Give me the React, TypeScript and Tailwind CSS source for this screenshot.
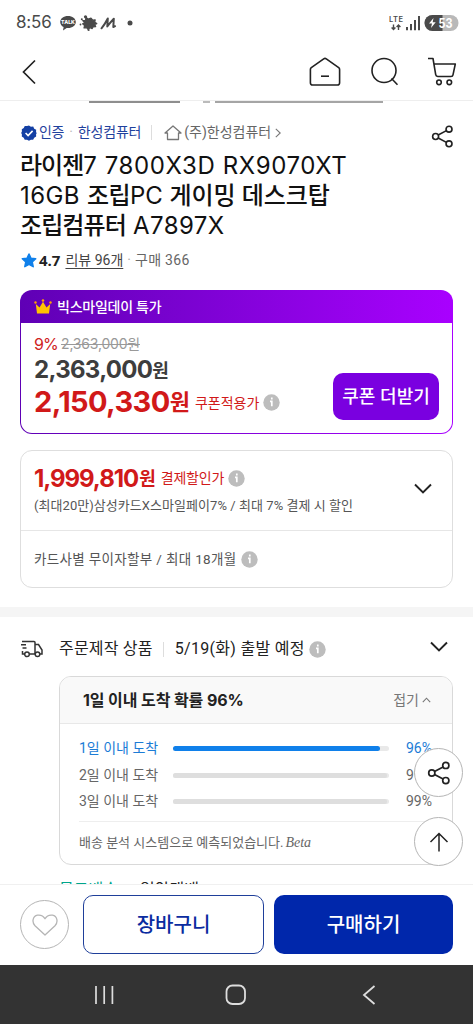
import { ReactNode } from 'react';

const arrivals = [
  { label: '1일 이내 도착', percent: 96, active: true },
  { label: '2일 이내 도착', percent: 99, active: false },
  { label: '3일 이내 도착', percent: 99, active: false },
];

function InfoIcon() {
  return (
    <svg width="17" height="17" viewBox="0 0 17 17" className="shrink-0">
      <circle cx="8.5" cy="8.5" r="8.2" fill="#bdbdbd" />
      <path d="M8.8 3.6v1.9M7 7.4h1.8v4.9" stroke="#fff" strokeWidth="1.7" fill="none" />
    </svg>
  );
}

function ShareIcon({ size = 24 }: { size?: number }) {
  return (
    <svg width={size} height={size} viewBox="0 0 24 24" fill="none" stroke="#222" strokeWidth="1.7">
      <circle cx="4.8" cy="12" r="3.1" />
      <circle cx="18.8" cy="4.4" r="3.1" />
      <circle cx="18.8" cy="19.6" r="3.1" />
      <path d="M7.5 10.5l8.6-4.6M7.5 13.5l8.6 4.6" />
    </svg>
  );
}

function ChevronDown() {
  return (
    <svg width="18" height="12" viewBox="0 0 18 12" fill="none" stroke="#222" strokeWidth="1.9">
      <path d="M1 1.5l8 8 8-8" />
    </svg>
  );
}

function FloatingButton({ children }: { children: ReactNode }) {
  return (
    <button className="flex h-[49px] w-[49px] items-center justify-center rounded-full border border-[#b5b5b5] bg-white">
      {children}
    </button>
  );
}

function StatusBar() {
  return (
    <div className="flex h-11 shrink-0 items-center pl-4 pr-[14px] pt-px text-[#4a4a4a]">
      <span className="font-['Inter'] text-[17px] tracking-[-0.2px]">8:56</span>
      <svg width="74" height="18" viewBox="0 0 74 18" className="ml-2" fill="#4a4a4a">
        <path d="M8 2C3.600 2 .2 4.600 .2 8c0 2.200 1.400 4 3.400 5.100L3 16.500l3.700-2.600c.4.100.9.100 1.300.1 4.400 0 7.800-2.600 7.800-6S12.400 2 8 2z" />
        <text x="8" y="10.300" textAnchor="middle" fontFamily="Inter, sans-serif" fontSize="5.200" fontWeight="800" fill="#fff">TALK</text>
        <path d="M26 3.200l2.200 1.900 2.800-1 1.800 2.100 2.400-.4-.4 2.400 2 1.400-2 .9.900 2.200-2.700.2-.8 1.700-2.200-.9-1.900 1.700-1.500-1.800-2.600.3.600-2.400-2-1.600 2.200-1.100-2.100-2.100 2.800-.3z" stroke="#4a4a4a" strokeWidth="1.200" strokeLinejoin="round" />
        <circle cx="25.500" cy="2.800" r="1.600" />
        <circle cx="20.500" cy="10.500" r="0.900" />
        <circle cx="28.600" cy="16" r="1.100" />
        <circle cx="21.800" cy="5.200" r="1" />
        <path d="M41.500 14.300C43.500 12 46 8 47.800 4.500L47.300 12.500C49.500 9.500 51.500 7 53.800 4.700L53.300 13l1.800-.8" fill="none" stroke="#4a4a4a" strokeWidth="2" strokeLinejoin="round" strokeLinecap="round" />
        <circle cx="70" cy="9" r="2.500" />
      </svg>
      <svg width="70" height="18" viewBox="0 0 70 18" className="ml-auto" fill="#4a4a4a">
        <text x="0" y="8" fontFamily="Inter, sans-serif" fontSize="7.500" fontWeight="600" textLength="14">LTE</text>
        <path d="M4.500 10.500v5M2.600 13.600l1.900 2 1.900-2M9.500 16v-5M7.600 12.900l1.900-2 1.900 2" fill="none" stroke="#4a4a4a" strokeWidth="1.400" />
        <path d="M17 13h2v3.300h-2zM21 10h2v6.300h-2zM25 6h2v10.300h-2zM29 2h2v14.300h-2z" />
        <rect x="35.500" y="1" width="34" height="16" rx="8" fill="#b9b9b9" />
        <path d="M53.500 1h-10a8 8 0 000 16h10z" />
        <path d="M44.500 4l-4.500 5.600h3l-1 4.400 4.700-5.800h-3z" fill="#fff" />
        <text x="49.500" y="13.600" fontFamily="Inter, sans-serif" fontSize="12.500" fontWeight="700" fill="#fff" textLength="14" lengthAdjust="spacingAndGlyphs">53</text>
      </svg>
    </div>
  );
}

function Header() {
  return (
    <header className="flex h-[57px] shrink-0 items-center border-b border-[#eee] pl-[21px] pr-4">
      <svg width="16" height="26" viewBox="0 0 16 26" fill="none" stroke="#222" strokeWidth="1.700">
        <path d="M14 1.500L2.500 13 14 24.500" />
      </svg>
      <svg width="32" height="30" viewBox="0 0 32 30" className="ml-auto" fill="none" stroke="#222" strokeWidth="1.600">
        <path d="M2.300 10.700L14.700 1.800q1.300-.9 2.600 0L29.700 10.700q.9.700.9 1.800v13.200q0 2.300-2.300 2.300H3.700q-2.300 0-2.300-2.300V12.500q0-1.100.9-1.800z" strokeLinejoin="round" />
        <path d="M12 19.200h8" />
      </svg>
      <svg width="28" height="30" viewBox="0 0 28 30" className="ml-[30px]" fill="none" stroke="#222" strokeWidth="1.600">
        <circle cx="13" cy="13.500" r="12" />
        <path d="M20.500 21.500l6 6.300" />
      </svg>
      <svg width="30" height="30" viewBox="0 0 30 30" className="ml-[28px]" fill="none" stroke="#222" strokeWidth="1.600">
        <path d="M1 1.500h5l2.700 16.200q.3 1.800 2 1.800h13.300q1.700 0 2-1.700L28.300 7H7" strokeLinejoin="round" />
        <circle cx="12" cy="25.300" r="2.300" />
        <circle cx="22.300" cy="25.300" r="2.300" />
      </svg>
    </header>
  );
}

function ProductInfo() {
  return (
    <section className="px-5">
      <div className="flex h-[59px] items-center text-[14px]">
        <svg width="18" height="18" viewBox="0 0 18 18">
          <path d="M9 1l2.100 1.300 2.500-.1 1.100 2.200 2.100 1.300-.1 2.500L17.500 9l-.8 1.600.1 2.400-2.100 1.300-1.200 2.200-2.400-.1L9 17.500l-2.100-1.100-2.500.1-1.100-2.200L1.200 13l.1-2.400L.5 9l.8-1.600L1.200 5l2.100-1.300 1.100-2.200 2.500.1z" fill="#1440a4" transform="translate(0.700 0.600) scale(0.920)" />
          <path d="M5.600 9l2.500 2.500 4.500-4.600" stroke="#fff" strokeWidth="1.600" fill="none" />
        </svg>
        <span className="ml-px tracking-[-0.300px] text-[#1f419d]">인증</span>
        <span className="mx-[5px] text-[#bbb]">·</span>
        <span className="tracking-[-0.200px] text-[#1f419d]">한성컴퓨터</span>
        <span className="ml-[10px] h-[15px] w-px bg-[#ddd]" />
        <svg width="18" height="16" viewBox="0 0 18 16" className="ml-3" fill="none" stroke="#777" strokeWidth="1.300">
          <path d="M1 8l8-7 8 7h-2.500v6.500h-11V8z" strokeLinejoin="round" />
        </svg>
        <span className="ml-[2px] text-[#666]">(주)한성컴퓨터</span>
        <svg width="6" height="10" viewBox="0 0 6 10" className="ml-1" fill="none" stroke="#777" strokeWidth="1.100">
          <path d="M.8.800L5.200 5 .8 9.200" />
        </svg>
        <span className="ml-auto mt-2 -mr-px">
          <ShareIcon size={23} />
        </span>
      </div>
      <h1 className="-mt-[11px] font-[Inter,'Noto_Sans_CJK_KR',sans-serif] text-[24px] leading-[30px] text-[#111]">
        <span className="block whitespace-nowrap">
          <span className="font-medium tracking-[-1px]">라이젠</span>
          <span className="tracking-[0.600px]">7 7800X3D RX9070XT</span>
        </span>
        <span className="block whitespace-nowrap">
          <span className="tracking-[0.400px]">16GB </span>
          <span className="font-medium tracking-[-0.600px]">조립</span>PC{' '}
          <span className="font-medium tracking-[-0.100px]">게이밍 데스크탑</span>
        </span>
        <span className="block whitespace-nowrap">
          <span className="font-medium tracking-[-0.900px]">조립컴퓨터</span>
          <span className="tracking-[0.400px]"> A7897X</span>
        </span>
      </h1>
      <div className="mt-[7px] flex h-6 items-center text-[14px] text-[#666]">
        <svg width="16" height="15" viewBox="0 0 16 15" className="ml-px">
          <path d="M8 1l2 4.300 4.700.5-3.500 3.200 1 4.700L8 11.400l-4.200 2.300 1-4.700L1.300 5.800 6 5.300z" fill="#1080ea" stroke="#1080ea" strokeWidth="1.500" strokeLinejoin="round" />
        </svg>
        <span className="ml-[2px] font-['Open_Sans'] text-[15px] font-bold text-[#222]">4.7</span>
        <span className="ml-[5px] text-[#444] underline underline-offset-[3px]">리뷰 96개</span>
        <span className="mx-1 text-[#aaa]">·</span>
        <span className="tracking-[0.300px]">구매 366</span>
      </div>
    </section>
  );
}

function PromoCard() {
  return (
    <section className="mx-5 mt-[18px] h-[144px] shrink-0 rounded-xl bg-linear-to-r from-[#5f00b5] to-[#a900ff] p-px">
      <div className="flex h-8 items-center pl-[13px]">
        <svg width="18" height="16" viewBox="0 0 18 16" fill="#ffc400">
          <path d="M1.800 5l3.700 3.500L9 2.800l3.500 5.700L16.200 5 15 14.500H3z" />
          <circle cx="1.500" cy="3.500" r="1.200" fill="#ffa000" />
          <circle cx="9" cy="1.500" r="1.300" fill="#ffa000" />
          <circle cx="16.500" cy="3.500" r="1.200" fill="#ffa000" />
        </svg>
        <span className="ml-[5px] text-[14px] font-medium tracking-[-0.250px] text-white">빅스마일데이 특가</span>
      </div>
      <div className="flex h-[110px] justify-between rounded-b-[11px] bg-white pl-[13px] pr-[13px] font-[Inter,'Noto_Sans_CJK_KR',sans-serif]">
        <div className="whitespace-nowrap pt-[9px]">
          <div className="flex h-[23px] items-center">
            <span className="text-[16px] tracking-[-0.800px] text-[#cf2222]">9%</span>
            <span className="ml-[3px] text-[14px] tracking-[-0.200px] text-[#999] line-through">2,363,000원</span>
          </div>
          <div className="flex h-[30px] items-center text-[24px] font-bold text-[#3d3d3d]">
            <span className="tracking-[-0.700px]">2,363,000</span>
            <span className="text-[18px]">원</span>
          </div>
          <div className="flex h-[34px] items-center text-[#d11919]">
            <span className="text-[29px] font-bold tracking-[-0.600px]">2,150,330</span>
            <span className="text-[22px] font-bold">원</span>
            <span className="ml-[5px] mr-1 text-[14px]">쿠폰적용가</span>
            <InfoIcon />
          </div>
        </div>
        <button className="mt-[50px] h-[47px] w-[106px] rounded-[10px] bg-[#7a00e0] text-[18px] font-medium text-white">
          쿠폰 더받기
        </button>
      </div>
    </section>
  );
}

function PaymentCard() {
  return (
    <section className="mx-5 mt-4 h-[138px] shrink-0 whitespace-nowrap rounded-xl border border-[#dedede]">
      <div className="flex h-20 items-center justify-between border-b border-[#e6e6e6] pl-[13px] pr-5">
        <div>
          <div className="flex h-[30px] items-center text-[#d11919]">
            <span className="font-['Inter'] text-[24px] font-bold tracking-[-1.050px]">1,999,810</span>
            <span className="ml-px text-[18px] font-bold">원</span>
            <span className="ml-[5px] mr-1 text-[14px] tracking-[-0.200px]">결제할인가</span>
            <InfoIcon />
          </div>
          <p className="h-6 text-[13px] leading-6 tracking-[0.050px] text-[#555]">(최대20만)삼성카드X스마일페이7% / 최대 7% 결제 시 할인</p>
        </div>
        <span className="-mt-1">
          <ChevronDown />
        </span>
      </div>
      <div className="flex h-14 items-center gap-1 pl-[13px] text-[13.500px] tracking-[0.350px] text-[#555]">
        <span>카드사별 무이자할부 / 최대 18개월</span>
        <InfoIcon />
      </div>
    </section>
  );
}

function Delivery() {
  return (
    <section className="whitespace-nowrap px-5">
      <div className="flex h-[59px] items-center pt-[5px] text-[16px] text-[#222]">
        <svg width="24" height="18" viewBox="0 0 24 18" fill="none" stroke="#333" strokeWidth="1.500">
          <path d="M2 1.500h12q1 0 1 1V14h-5.500M15 4.500h3.500l3.500 5.500v4h-2M4.500 14H2.500v-3M1 4.800h5M2.500 8h4" />
          <circle cx="7" cy="14.300" r="2.300" />
          <circle cx="17.500" cy="14.300" r="2.300" />
        </svg>
        <span className="ml-[15px] tracking-[0.200px]">주문제작 상품</span>
        <span className="ml-[10px] mr-[11px] h-[15px] w-px bg-[#ddd]" />
        <span className="mr-1 tracking-[0.300px]">5/19(화) 출발 예정</span>
        <InfoIcon />
        <span className="ml-auto mr-[5px] mb-1">
          <ChevronDown />
        </span>
      </div>
      <div className="ml-[39px] h-[189px] overflow-hidden rounded-xl border border-[#d9d9d9]">
        <div className="flex h-[47px] items-center justify-between border-b border-[#e8e8e8] bg-[#f9f9f9] pl-[23px] pr-[21px]">
          <span className="font-[Inter,'Noto_Sans_CJK_KR',sans-serif] text-[16px] font-bold tracking-[-0.100px] text-[#222]">
            1일 이내 도착 확률 96%
          </span>
          <span className="flex items-center gap-[3px] text-[14px] text-[#777]">
            접기
            <svg width="9" height="6" viewBox="0 0 9 6" fill="none" stroke="#777" strokeWidth="1.100">
              <path d="M.8 5.200L4.500 1.200l3.700 4" />
            </svg>
          </span>
        </div>
        <div className="ml-[19px] mr-[19px] border-b border-[#eee] pt-[11px] pb-[6px]">
          {arrivals.map((row) => (
            <div
              key={row.label}
              className={`flex h-[26.800px] items-center text-[14px] ${row.active ? 'text-[#1c7cd6]' : 'text-[#666]'}`}
            >
              <span className="w-[94px]">{row.label}</span>
              <span className="h-[5px] w-[216px] rounded-full bg-[#e9e9e9]">
                <span
                  className={`block h-full rounded-full ${row.active ? 'bg-[#1080ea]' : 'bg-[#dedede]'}`}
                  style={{ width: `${row.percent}%` }}
                />
              </span>
              <span className="ml-[17px]">{row.percent}%</span>
            </div>
          ))}
        </div>
        <p className="ml-[19px] flex h-10 items-center text-[13px] text-[#666]">
          배송 분석 시스템으로 예측되었습니다.
          <span className="ml-[2px] font-['Liberation_Serif'] text-[14px] italic">Beta</span>
        </p>
      </div>
      <div className="ml-[39px] mt-[13px] flex h-6 text-[16px] leading-6">
        <span className="text-[#00a58b]">무료배송</span>
        <span className="mx-[9px] text-[#aaa]">·</span>
        <span className="text-[#222]">일양택배</span>
      </div>
    </section>
  );
}

export default function App() {
  return (
    <div className="relative flex h-[1024px] w-[473px] flex-col overflow-hidden bg-white font-[Roboto,'Noto_Sans_CJK_KR',sans-serif]">
      <StatusBar />
      <Header />
      <main className="flex min-h-0 flex-1 flex-col overflow-hidden">
        {/* bottom edge of the product photo */}
        <div className="flex h-[2px] shrink-0 pl-[89px]">
          <span className="w-[91px] bg-[#8e8e8e]" />
          <span className="ml-[23px] w-[7px] bg-[#bbb]" />
          <span className="ml-[5px] w-[168px] bg-[#a5a5a5]" />
        </div>
        <ProductInfo />
        <PromoCard />
        <PaymentCard />
        <div className="mt-[19px] h-[10px] shrink-0 bg-[#f5f5f5]" />
        <Delivery />
      </main>

      <div className="flex h-[81px] shrink-0 items-start border-t border-[#f0f0f0] px-5 pt-[10px]">
        <button className="mt-[5px] flex h-[49px] w-[49px] items-center justify-center rounded-full border border-[#b5b5b5]">
          <svg width="26" height="22" viewBox="0 0 26 22" fill="none" stroke="#b5b5b5" strokeWidth="1.300">
            <path d="M13 21L3 11.800C-.5 8 .8 2 5.500 1.200 8.800.700 11.500 2.200 13 4.800c1.500-2.600 4.200-4.100 7.500-3.600C25.200 2 26.500 8 23 11.800z" strokeLinejoin="round" />
          </svg>
        </button>
        <button className="ml-[14px] h-[59px] w-[181px] rounded-[10px] border border-[#1f3f9a] text-[20px] font-medium text-[#0b2ca0]">
          장바구니
        </button>
        <button className="ml-[10px] h-[59px] w-[179px] rounded-[10px] bg-[#0027ab] text-[20px] font-medium text-white">
          구매하기
        </button>
      </div>

      <nav className="flex h-[59px] shrink-0 items-center bg-[#333] pl-[94px]">
        <svg width="20" height="20" viewBox="0 0 20 20" fill="none" stroke="#ddd" strokeWidth="1.700">
          <path d="M2 1v18M10.200 1v18M18.400 1v18" />
        </svg>
        <svg width="22" height="22" viewBox="0 0 22 22" className="ml-[111px]" fill="none" stroke="#ddd" strokeWidth="1.800">
          <rect x="1.500" y="1.500" width="18.500" height="18.500" rx="6" />
        </svg>
        <svg width="14" height="20" viewBox="0 0 14 20" className="ml-[115px]" fill="none" stroke="#ddd" strokeWidth="1.800">
          <path d="M12.500 1L2 10l10.500 9" />
        </svg>
      </nav>

      <div className="absolute top-[748px] right-[10px] flex flex-col gap-5">
        <FloatingButton>
          <ShareIcon size={24} />
        </FloatingButton>
        <FloatingButton>
          <svg width="20" height="20" viewBox="0 0 20 20" fill="none" stroke="#222" strokeWidth="1.500">
            <path d="M10 19.500V1.500M1.500 10L10 1.500l8.500 8.500" />
          </svg>
        </FloatingButton>
      </div>
    </div>
  );
}
